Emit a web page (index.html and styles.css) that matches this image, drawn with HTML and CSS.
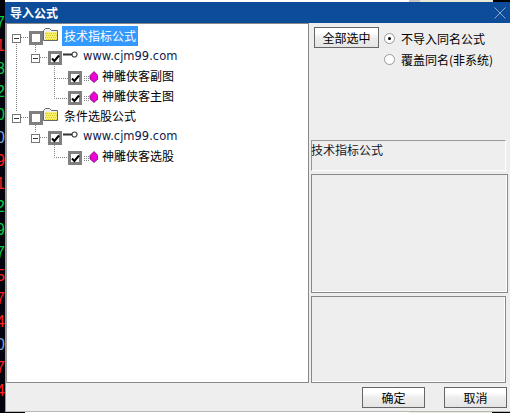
FILE: index.html
```html
<!DOCTYPE html>
<html lang="en">
<head>
  <meta charset="UTF-8">
  <title>导入公式</title>
  <link rel="stylesheet" href="styles.css">
</head>
<body>
  <div class="screen">
    <div class="strip strip-top">
      <span class="seg seg-black" style="width:5px"></span>
      <span class="seg seg-white" style="width:404px"></span>
      <span class="seg seg-gray" style="width:11px"></span>
      <span class="seg seg-light" style="width:73px"></span>
      <span class="seg seg-black" style="width:17px"></span>
    </div>

    <div class="middle">
      <div class="ticker">
        <span class="num green">7</span>
        <span class="num red">1</span>
        <span class="num green">8</span>
        <span class="num green">2</span>
        <span class="num green">0</span>
        <span class="num blue">0</span>
        <span class="num red">9</span>
        <span class="num red">1</span>
        <span class="num green">2</span>
        <span class="num green">9</span>
        <span class="num green">7</span>
        <span class="num red">5</span>
        <span class="num red">7</span>
        <span class="num red">4</span>
        <span class="num blue">0</span>
        <span class="num red">7</span>
        <span class="num red">4</span>
      </div>

      <div class="dialog">
        <div class="titlebar">
          <span class="title">导入公式</span>
          <svg class="close" width="12" height="12" viewBox="0 0 12 12">
            <path d="M0.5 0.5L11.5 11.5M11.5 0.5L0.5 11.5" stroke="#8ea6c6" stroke-width="1" fill="none"/>
          </svg>
        </div>

        <div class="panes">
          <div class="tree">
            <!-- connector lines, in page coordinates -->
            <svg class="connectors" width="302" height="358" viewBox="7 24 302 358">
              <g stroke="#808080" stroke-width="1" stroke-dasharray="1 1" fill="none">
                <path d="M16.5 42V112"/>
                <path d="M21 37.5H29"/>
                <path d="M35.5 45V53"/>
                <path d="M40 57.5H48"/>
                <path d="M54.5 66V98.5H68"/>
                <path d="M55 78.5H68"/>
                <path d="M21 117.5H29"/>
                <path d="M35.5 125V133"/>
                <path d="M40 137.5H48"/>
                <path d="M54.5 145V157.5H68"/>
              </g>
            </svg>

            <div class="row level-0">
              <span class="expander"></span>
              <span class="check"></span>
              <svg class="folder" width="15" height="13" viewBox="0 0 15 13">
                <path d="M0.5 12.5V2.5L2.5 0.5H6.5L8.5 2.5H14.5V12.5Z" fill="#f0f0f0" stroke="#666"/>
                <rect x="2" y="4" width="12" height="8" fill="#f8f070"/>
                <path d="M2 5.5H14M3 7.5H14M2 9.5H14M3 11.5H14" stroke="#d8c818" stroke-dasharray="1 1"/>
              </svg>
              <span class="label selected">技术指标公式</span>
            </div>
            <div class="row level-1">
              <span class="expander"></span>
              <span class="check checked">
                <svg width="9" height="9" viewBox="0 0 9 9"><path d="M1 4.5L3.4 7L8 1.5" stroke="#000" stroke-width="2" fill="none"/></svg>
              </span>
              <svg class="key" width="15" height="7" viewBox="0 0 15 7">
                <circle cx="11.5" cy="3.5" r="2.5" fill="#fff" stroke="#444" stroke-width="1.2"/>
                <path d="M0 3.5H9" stroke="#333" stroke-width="2" fill="none"/>
              </svg>
              <span class="label site">www.cjm99.com</span>
            </div>
            <div class="row level-2">
              <span class="check checked">
                <svg width="9" height="9" viewBox="0 0 9 9"><path d="M1 4.5L3.4 7L8 1.5" stroke="#000" stroke-width="2" fill="none"/></svg>
              </span>
              <svg class="gem" width="16" height="12" viewBox="0 0 16 12">
                <path d="M2 5.5H8M2 7.5H8M2 9.5H8" stroke="#888" stroke-dasharray="1 1"/>
                <path d="M12 0.5L16 4.5V8L12 11.5L8 8V4.5Z" fill="#f000d8" stroke="#602060" stroke-width="0.8"/>
              </svg>
              <span class="label">神雕侠客副图</span>
            </div>
            <div class="row level-2">
              <span class="check checked">
                <svg width="9" height="9" viewBox="0 0 9 9"><path d="M1 4.5L3.4 7L8 1.5" stroke="#000" stroke-width="2" fill="none"/></svg>
              </span>
              <svg class="gem" width="16" height="12" viewBox="0 0 16 12">
                <path d="M2 5.5H8M2 7.5H8M2 9.5H8" stroke="#888" stroke-dasharray="1 1"/>
                <path d="M12 0.5L16 4.5V8L12 11.5L8 8V4.5Z" fill="#f000d8" stroke="#602060" stroke-width="0.8"/>
              </svg>
              <span class="label">神雕侠客主图</span>
            </div>
            <div class="row level-0">
              <span class="expander"></span>
              <span class="check"></span>
              <svg class="folder" width="15" height="13" viewBox="0 0 15 13">
                <path d="M0.5 12.5V2.5L2.5 0.5H6.5L8.5 2.5H14.5V12.5Z" fill="#f0f0f0" stroke="#666"/>
                <rect x="2" y="4" width="12" height="8" fill="#f8f070"/>
                <path d="M2 5.5H14M3 7.5H14M2 9.5H14M3 11.5H14" stroke="#d8c818" stroke-dasharray="1 1"/>
              </svg>
              <span class="label">条件选股公式</span>
            </div>
            <div class="row level-1">
              <span class="expander"></span>
              <span class="check checked">
                <svg width="9" height="9" viewBox="0 0 9 9"><path d="M1 4.5L3.4 7L8 1.5" stroke="#000" stroke-width="2" fill="none"/></svg>
              </span>
              <svg class="key" width="15" height="7" viewBox="0 0 15 7">
                <circle cx="11.5" cy="3.5" r="2.5" fill="#fff" stroke="#444" stroke-width="1.2"/>
                <path d="M0 3.5H9" stroke="#333" stroke-width="2" fill="none"/>
              </svg>
              <span class="label site">www.cjm99.com</span>
            </div>
            <div class="row level-2">
              <span class="check checked">
                <svg width="9" height="9" viewBox="0 0 9 9"><path d="M1 4.5L3.4 7L8 1.5" stroke="#000" stroke-width="2" fill="none"/></svg>
              </span>
              <svg class="gem" width="16" height="12" viewBox="0 0 16 12">
                <path d="M2 5.5H8M2 7.5H8M2 9.5H8" stroke="#888" stroke-dasharray="1 1"/>
                <path d="M12 0.5L16 4.5V8L12 11.5L8 8V4.5Z" fill="#f000d8" stroke="#602060" stroke-width="0.8"/>
              </svg>
              <span class="label">神雕侠客选股</span>
            </div>
          </div>

          <div class="side">
            <div class="options">
              <button class="btn btn-all">全部选中</button>
              <div class="radios">
                <div class="radio-row"><span class="radio on"></span>不导入同名公式</div>
                <div class="radio-row"><span class="radio"></span>覆盖同名(非系统)</div>
              </div>
            </div>
            <div class="info">技术指标公式</div>
            <div class="box box-mid"></div>
            <div class="box box-low"></div>
          </div>
        </div>

        <div class="footer">
          <button class="btn btn-foot">确定</button>
          <button class="btn btn-foot">取消</button>
        </div>
      </div>
    </div>

    <div class="strip strip-bottom">
      <span class="seg seg-black" style="width:25px"></span>
      <span class="seg seg-white" style="width:384px"></span>
      <span class="seg seg-light" style="width:83px"></span>
      <span class="seg seg-black" style="width:18px"></span>
    </div>
  </div>
</body>
</html>
```

FILE: styles.css
```css
* {
  box-sizing: border-box;
}
html, body {
  margin: 0;
  padding: 0;
  background: #000;
}
body {
  font-family: "Noto Sans CJK SC", "Liberation Sans", sans-serif;
  font-size: 12px;
  color: #000;
}
.screen {
  width: 510px;
  height: 413px;
  overflow: hidden;
  display: flex;
  flex-direction: column;
}

/* bits of the window behind the dialog */
.strip {
  display: flex;
  flex-shrink: 0;
}
.strip-top {
  height: 2px;
}
.strip-bottom {
  height: 1px;
}
.seg-black {
  background: #000;
}
.seg-white {
  background: #fff;
}
.seg-gray {
  background: #c8c8c8;
}
.seg-light {
  background: #ece9d8;
}
.middle {
  display: flex;
  height: 410px;
}
.ticker {
  width: 5px;
  flex-shrink: 0;
  background: #02030c;
  overflow: hidden;
  display: flex;
  flex-direction: column;
  align-items: flex-end;
  padding-top: 9px;
  font-family: "Liberation Sans", sans-serif;
  font-size: 16px;
  line-height: 23px;
}
.num {
  display: block;
  height: 23px;
  flex-shrink: 0;
}
.green {
  color: #00d040;
}
.red {
  color: #ff2020;
}
.blue {
  color: #70a8e0;
}

.dialog {
  flex: 1;
  background: #eeeeee;
  border-left: 1px solid #999;
  border-bottom: 1px solid #b8b8b0;
  display: flex;
  flex-direction: column;
}
.titlebar {
  height: 21px;
  margin-left: -1px;
  background: #0d4c98;
  display: flex;
  align-items: center;
  justify-content: space-between;
  padding: 0 4px 0 5px;
  flex-shrink: 0;
}
.title {
  color: #fff;
  font-weight: bold;
  font-size: 12px;
}
.panes {
  display: flex;
  height: 360px;
  gap: 2px;
}
.tree {
  position: relative;
  width: 303px;
  background: #fff;
  border: 1px solid #888;
  border-left-color: #999;
  padding-top: 4px;
}
.connectors {
  position: absolute;
  left: 0;
  top: 0;
}
.row {
  position: relative;
  display: flex;
  align-items: center;
  height: 20px;
  white-space: nowrap;
}
.level-0 {
  padding-left: 5px;
}
.level-1 {
  padding-left: 24px;
}
.level-2 {
  padding-left: 61px;
}
.expander {
  position: relative;
  width: 9px;
  height: 9px;
  margin-right: 8px;
  background: #fff;
  border: 1px solid #777;
  flex-shrink: 0;
}
.expander::after {
  content: "";
  position: absolute;
  left: 1px;
  right: 1px;
  top: 3px;
  height: 1px;
  background: #333;
}
.check {
  width: 14px;
  height: 14px;
  background: #fff;
  border: 3px solid #808080;
  display: flex;
  align-items: center;
  justify-content: center;
  flex-shrink: 0;
}
.check svg {
  flex-shrink: 0;
}
.folder {
  margin-top: -7px;
  flex-shrink: 0;
}
.key {
  margin-left: 1px;
  margin-top: -7px;
  flex-shrink: 0;
}
.gem {
  margin-top: -3px;
  flex-shrink: 0;
}
.label {
  align-self: flex-start;
  height: 20px;
  margin-top: -2px;
  margin-left: 2px;
  padding: 0 2px;
  line-height: 20px;
}
.folder + .label {
  margin-left: 4px;
}
.key + .label {
  margin-left: 3px;
}
.selected {
  background: #3399ff;
  color: #fff;
}
.site {
  font-family: "DejaVu Sans", sans-serif;
  font-size: 11.5px;
  color: #10204a;
}

.side {
  width: 196px;
  padding-top: 4px;
  display: flex;
  flex-direction: column;
}
.options {
  height: 113px;
  display: flex;
  padding-left: 3px;
  flex-shrink: 0;
}
.btn {
  font-family: inherit;
  font-size: 12px;
  color: #000;
  padding: 0;
  border: 1px solid #666;
  border-radius: 0;
  background: linear-gradient(#fff 0%, #fff 25%, #eeeeee 50%, #e4e4e4 100%);
}
.btn-all {
  width: 65px;
  height: 21px;
}
.radios {
  margin-left: 5px;
  display: flex;
  flex-direction: column;
}
.radio-row {
  display: flex;
  align-items: center;
  height: 20px;
  margin-top: 1px;
}
.radio {
  position: relative;
  width: 11px;
  height: 11px;
  margin-right: 6px;
  border-radius: 50%;
  background: #fff;
  border: 1px solid #999;
}
.radio.on::after {
  content: "";
  position: absolute;
  left: 3px;
  top: 3px;
  width: 3px;
  height: 3px;
  border-radius: 50%;
  background: #000;
}
.info {
  height: 31px;
  width: 195px;
  border: 1px solid #fff;
  border-top-color: #999;
  border-left-color: #999;
  line-height: 18px;
  color: #10202a;
  flex-shrink: 0;
  text-indent: -1px;
}
.box {
  border: 1px solid #888;
  box-shadow: inset -1px -1px 0 #fff;
  flex-shrink: 0;
}
.box-mid {
  height: 119px;
  width: 197px;
  margin-top: 3px;
}
.box-low {
  height: 87px;
  width: 195px;
  margin-top: 3px;
}
.footer {
  display: flex;
  justify-content: flex-end;
  gap: 19px;
  padding: 4px 3px 0 0;
}
.btn-foot {
  width: 63px;
  height: 21px;
}
```
